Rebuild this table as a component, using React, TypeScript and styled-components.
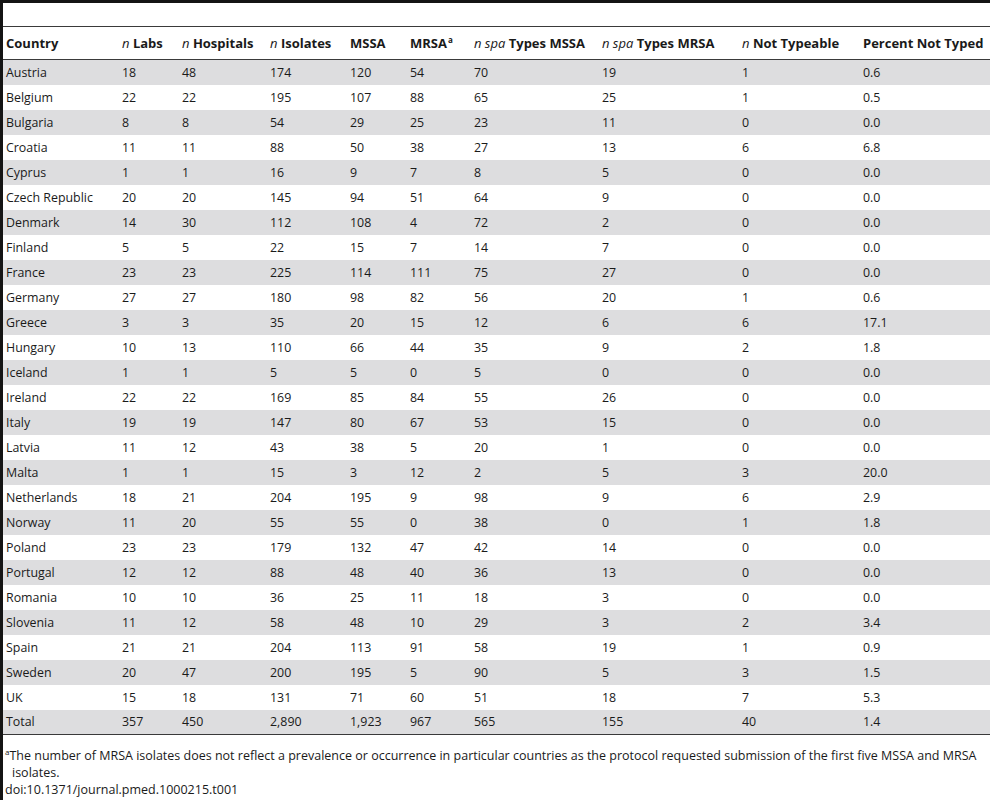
import React from "react";
import styled, { createGlobalStyle } from "styled-components";

const Global = createGlobalStyle`
  html, body { margin: 0; padding: 0; background: #ffffff; }
  body { font-family: "Open Sans", "Liberation Sans", sans-serif; color: #1a1a1a; }
`;

const Frame = styled.div`
  width: 990px;
  height: 800px;
  box-sizing: border-box;
  border-left: 3px solid #141414;
  border-top: 3px solid #141414;
  display: flex;
  flex-direction: column;
  overflow: hidden;
`;

const Table = styled.table`
  margin-top: 23px;
  width: 987px;
  border-collapse: collapse;
  table-layout: fixed;
  font-size: 12.4px;
`;

const HeadRow = styled.tr`
  border-top: 1px solid #3a3a3a;
  border-bottom: 1px solid #3a3a3a;
`;

const Th = styled.th<{ $w: number }>`
  width: ${(p) => p.$w}px;
  height: 33px;
  padding: 0 0 0 3px;
  text-align: left;
  font-weight: 700;
  font-size: 13px;
  white-space: nowrap;
  box-sizing: border-box;
`;

const Row = styled.tr<{ $shade: boolean }>`
  background: ${(p) => (p.$shade ? "#dddddf" : "#ffffff")};
  height: 25px;
`;

const LastRow = styled(Row)`
  border-bottom: 1px solid #3a3a3a;
`;

const Td = styled.td`
  padding: 0 0 0 3px;
  white-space: nowrap;
  vertical-align: middle;
`;

const Em = styled.i`
  font-weight: 400;
`;

const Sup = styled.sup`
  font-size: 8px;
  line-height: 0;
  vertical-align: 5px;
  margin-left: 1px;
`;

const Foot = styled.div`
  margin-top: 12px;
  padding-left: 2px;
  font-size: 12.5px;
  line-height: 17px;
`;

const Note = styled.p`
  margin: 0;
  text-indent: -7px;
  padding-left: 7px;
`;

const NoteSup = styled.sup`
  font-size: 8px;
  line-height: 0;
  vertical-align: 5px;
`;

const Doi = styled.div`
  margin: 0;
`;

const widths = [116, 60, 88, 80, 60, 64, 128, 140, 121, 130];

const rows: string[][] = [
  ["Austria", "18", "48", "174", "120", "54", "70", "19", "1", "0.6"],
  ["Belgium", "22", "22", "195", "107", "88", "65", "25", "1", "0.5"],
  ["Bulgaria", "8", "8", "54", "29", "25", "23", "11", "0", "0.0"],
  ["Croatia", "11", "11", "88", "50", "38", "27", "13", "6", "6.8"],
  ["Cyprus", "1", "1", "16", "9", "7", "8", "5", "0", "0.0"],
  ["Czech Republic", "20", "20", "145", "94", "51", "64", "9", "0", "0.0"],
  ["Denmark", "14", "30", "112", "108", "4", "72", "2", "0", "0.0"],
  ["Finland", "5", "5", "22", "15", "7", "14", "7", "0", "0.0"],
  ["France", "23", "23", "225", "114", "111", "75", "27", "0", "0.0"],
  ["Germany", "27", "27", "180", "98", "82", "56", "20", "1", "0.6"],
  ["Greece", "3", "3", "35", "20", "15", "12", "6", "6", "17.1"],
  ["Hungary", "10", "13", "110", "66", "44", "35", "9", "2", "1.8"],
  ["Iceland", "1", "1", "5", "5", "0", "5", "0", "0", "0.0"],
  ["Ireland", "22", "22", "169", "85", "84", "55", "26", "0", "0.0"],
  ["Italy", "19", "19", "147", "80", "67", "53", "15", "0", "0.0"],
  ["Latvia", "11", "12", "43", "38", "5", "20", "1", "0", "0.0"],
  ["Malta", "1", "1", "15", "3", "12", "2", "5", "3", "20.0"],
  ["Netherlands", "18", "21", "204", "195", "9", "98", "9", "6", "2.9"],
  ["Norway", "11", "20", "55", "55", "0", "38", "0", "1", "1.8"],
  ["Poland", "23", "23", "179", "132", "47", "42", "14", "0", "0.0"],
  ["Portugal", "12", "12", "88", "48", "40", "36", "13", "0", "0.0"],
  ["Romania", "10", "10", "36", "25", "11", "18", "3", "0", "0.0"],
  ["Slovenia", "11", "12", "58", "48", "10", "29", "3", "2", "3.4"],
  ["Spain", "21", "21", "204", "113", "91", "58", "19", "1", "0.9"],
  ["Sweden", "20", "47", "200", "195", "5", "90", "5", "3", "1.5"],
  ["UK", "15", "18", "131", "71", "60", "51", "18", "7", "5.3"],
];

const total = ["Total", "357", "450", "2,890", "1,923", "967", "565", "155", "40", "1.4"];

export default function App() {
  return (
    <>
      <Global />
      <Frame>
        <Table>
          <thead>
            <HeadRow>
              <Th $w={widths[0]}>Country</Th>
              <Th $w={widths[1]}><Em>n</Em> Labs</Th>
              <Th $w={widths[2]}><Em>n</Em> Hospitals</Th>
              <Th $w={widths[3]}><Em>n</Em> Isolates</Th>
              <Th $w={widths[4]}>MSSA</Th>
              <Th $w={widths[5]}>MRSA<Sup>a</Sup></Th>
              <Th $w={widths[6]}><Em>n spa</Em> Types MSSA</Th>
              <Th $w={widths[7]}><Em>n spa</Em> Types MRSA</Th>
              <Th $w={widths[8]}><Em>n</Em> Not Typeable</Th>
              <Th $w={widths[9]}>Percent Not Typed</Th>
            </HeadRow>
          </thead>
          <tbody>
            {rows.map((r, i) => (
              <Row key={r[0]} $shade={i % 2 === 0}>
                {r.map((c, j) => (
                  <Td key={j}>{c}</Td>
                ))}
              </Row>
            ))}
            <LastRow $shade={true}>
              {total.map((c, j) => (
                <Td key={j}>{c}</Td>
              ))}
            </LastRow>
          </tbody>
        </Table>
        <Foot>
          <Note>
            <NoteSup>a</NoteSup>The number of MRSA isolates does not reflect a prevalence or occurrence in particular countries as the protocol requested submission of the first five MSSA and MRSA isolates.
          </Note>
          <Doi>doi:10.1371/journal.pmed.1000215.t001</Doi>
        </Foot>
      </Frame>
    </>
  );
}
